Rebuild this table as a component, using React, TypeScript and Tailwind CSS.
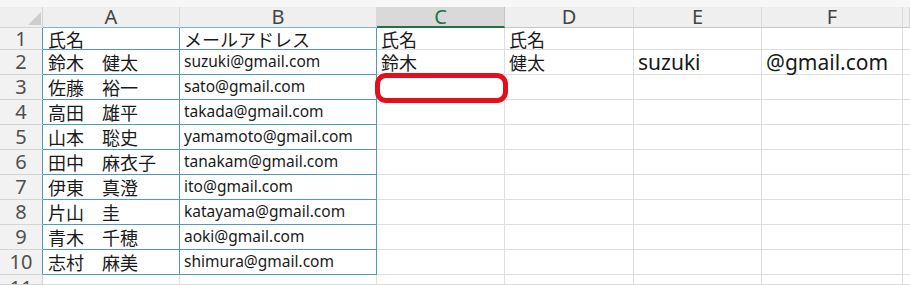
// App.tsx
// Excel-style sheet: names + mail addresses, split cells on the right.

const cols = ['A', 'B', 'C', 'D', 'E', 'F', ''];

const people: [string, string][] = [
  ['氏名', 'メールアドレス'],
  ['鈴木　健太', 'suzuki@gmail.com'],
  ['佐藤　裕一', 'sato@gmail.com'],
  ['高田　雄平', 'takada@gmail.com'],
  ['山本　聡史', 'yamamoto@gmail.com'],
  ['田中　麻衣子', 'tanakam@gmail.com'],
  ['伊東　真澄', 'ito@gmail.com'],
  ['片山　圭', 'katayama@gmail.com'],
  ['青木　千穂', 'aoki@gmail.com'],
  ['志村　麻美', 'shimura@gmail.com'],
];

// Right side: C..F for rows 1 and 2
const extra: Record<number, string[]> = {
  1: ['氏名', '氏名', '', ''],
  2: ['鈴木', '健太', 'suzuki', '@gmail.com'],
};

const rowHeights = ['h-[22px]', ...Array(9).fill('h-[25px]'), 'h-[10px]'];

export default function App() {
  const rows = Array.from({ length: 11 }, (_, i) => i + 1);

  return (
    <div className="relative w-[910px] h-[285px] overflow-hidden bg-white font-['Noto_Sans_CJK_JP',sans-serif] text-[#1a1a1a]">
      <div className="h-[7px] bg-[#f7f7f7]" />
      <div className="grid grid-cols-[43px_137px_197px_128px_129px_128px_141px_1fr]">
        {/* column header row */}
        <div className="relative h-[21px] bg-[#efefef] border-r border-b border-[#d4d4d4]">
          <svg className="absolute right-[1px] bottom-[2px]" width="13" height="13" viewBox="0 0 13 13">
            <polygon points="13,0 13,13 0,13" fill="#cdcdcd" />
          </svg>
        </div>
        {cols.map((c) =>
          c === 'C' ? (
            <div
              key="C"
              className="h-[21px] bg-[#d9d9d9] border-r border-[#c4c4c4] border-b-2 border-b-[#217346] flex items-center justify-center text-[20px] leading-none text-[#217346] font-['Noto_Sans',sans-serif]"
            >
              C
            </div>
          ) : (
            <div
              key={c || 'G'}
              className={`h-[21px] bg-[#efefef] border-r border-[#dadada] border-b ${c === 'A' || c === 'B' ? 'border-b-[#7fb4c4]' : 'border-b-[#c8c8c8]'} flex items-center justify-center text-[20px] leading-none text-[#444] font-['Noto_Sans',sans-serif]`}
            >
              {c}
            </div>
          )
        )}

        {rows.map((r, idx) => {
          const h = rowHeights[idx];
          const inTable = r <= 10;
          const person = people[r - 1];
          const right = extra[r] ?? ['', '', '', ''];
          return [
            <div
              key={`h${r}`}
              className={`${h} bg-[#f2f2f2] border-b border-[#d4d4d4] border-r ${inTable ? 'border-r-[#4e9db3] items-center' : 'border-r-[#d4d4d4] items-start pt-[3px] overflow-hidden'} flex justify-center text-[20px] leading-none text-[#505050] font-['Noto_Sans',sans-serif]`}
            >
              {r}
            </div>,
            <div
              key={`a${r}`}
              className={`${h} border-r border-b ${inTable ? 'border-[#4e9db3]' : 'border-[#dedede]'} pl-[5px] flex items-center text-[18px] leading-none whitespace-nowrap`}
            >
              {person?.[0]}
            </div>,
            <div
              key={`b${r}`}
              className={`${h} border-r border-b ${inTable ? 'border-[#4e9db3]' : 'border-[#dedede]'} pl-[4px] flex items-center leading-none whitespace-nowrap ${r === 1 ? 'text-[18px]' : "text-[15.5px] font-['Noto_Sans',sans-serif]"}`}
            >
              {person?.[1]}
            </div>,
            ...right.map((t, j) => (
              <div
                key={`x${r}-${j}`}
                className={`${h} border-r border-b border-[#dedede] pl-[4px] flex items-center leading-none whitespace-nowrap ${/[a-z@]/.test(t) ? "text-[21px] font-['Noto_Sans',sans-serif]" : 'text-[18px]'}`}
              >
                {t}
              </div>
            )),
            <div key={`g${r}`} className={`${h} border-b border-[#dedede]`} />,
          ];
        })}
      </div>

      {/* red marker around C3 */}
      <div className="absolute left-[375px] top-[73px] w-[133px] h-[30px] border-[5px] border-[#e3101c] rounded-[11px]" />
    </div>
  );
}
